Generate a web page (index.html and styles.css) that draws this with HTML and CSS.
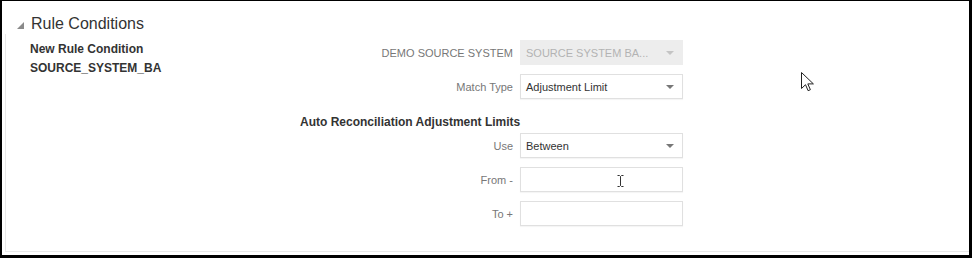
FILE: index.html
```html
<!DOCTYPE html>
<html lang="en">
<head>
  <meta charset="UTF-8">
  <title>Rule Conditions</title>
  <link rel="stylesheet" href="styles.css">
</head>
<body>

  <div class="screen">

    <!-- Section header -->
    <div class="section-title">
      <span class="disclosure"></span>
      <h2>Rule Conditions</h2>
    </div>

    <!-- Section body -->
    <div class="section-body">
      <div class="rule-name">
        <div>New Rule Condition</div>
        <div>SOURCE_SYSTEM_BA</div>
      </div>

      <div class="rule-form">
        <div class="form-row">
          <label>DEMO SOURCE SYSTEM</label>
          <div class="field disabled">
            <span>SOURCE SYSTEM BA...</span>
            <span class="caret"></span>
          </div>
        </div>

        <div class="form-row">
          <label>Match Type</label>
          <div class="field">
            <span>Adjustment Limit</span>
            <span class="caret"></span>
          </div>
        </div>

        <h3>Auto Reconciliation Adjustment Limits</h3>

        <div class="form-row">
          <label>Use</label>
          <div class="field">
            <span>Between</span>
            <span class="caret"></span>
          </div>
        </div>

        <div class="form-row">
          <label>From -</label>
          <div class="field text-field">
            <input type="text">
            <!-- I-beam cursor -->
            <svg class="ibeam" width="7" height="12" viewBox="0 0 7 12">
              <path d="M0.5 0.5h2l1 1 1-1h2M3.5 1.5v9M0.5 11.5h2l1-1 1 1h2" fill="none" stroke="#333" stroke-width="1"/>
            </svg>
          </div>
        </div>

        <div class="form-row">
          <label>To +</label>
          <div class="field text-field">
            <input type="text">
          </div>
        </div>
      </div>
    </div>

    <!-- Mouse pointer -->
    <svg class="pointer" width="13" height="20" viewBox="0 0 13 20">
      <path d="M0.5 0.5v16l4-3.8 2.6 6 2.3-1-2.6-5.8h5.6z" fill="#fff" stroke="#222" stroke-width="1" stroke-linejoin="round"/>
    </svg>

  </div>

</body>
</html>
```

FILE: styles.css
```css
* {
  margin: 0;
  padding: 0;
  box-sizing: border-box;
}

body {
  background: #000;
  font-family: 'Liberation Sans', Arial, sans-serif;
  color: #333;
  overflow: hidden;
}

.screen {
  position: relative;
  margin: 1px 3px 0 2px;
  height: 254px;
  background: #fff;
}

.section-title {
  display: flex;
  align-items: center;
  padding: 13px 0 0 15px;
  height: 33px;
}

.disclosure {
  width: 0;
  height: 0;
  border-left: 7px solid transparent;
  border-bottom: 7px solid #8a8a8a;
  margin: 3px 7px 0 0;
}

.section-title h2 {
  font-size: 16px;
  font-weight: normal;
  line-height: 20px;
  color: #333;
}

.section-body {
  display: flex;
  margin-left: 3px;
  height: 218px;
  padding: 6px 0 0 24px;
  border-left: 1px solid #e8e8e8;
  border-bottom: 1px solid #e8e8e8;
}

.rule-name {
  width: 270px;
  font-size: 12px;
  font-weight: bold;
  line-height: 19px;
  color: #333;
}

.rule-form {
  display: flex;
  flex-direction: column;
  gap: 9px;
}

.rule-form h3 {
  font-size: 12px;
  font-weight: bold;
  line-height: 16px;
  color: #333;
  margin: 6px 0 -6px;
}

.form-row {
  display: grid;
  grid-template-columns: 213px 163px;
  column-gap: 7px;
  align-items: center;
}

.form-row label {
  text-align: right;
  font-size: 11px;
  color: #777;
}

.field {
  position: relative;
  height: 25px;
  display: flex;
  align-items: center;
  justify-content: space-between;
  padding: 0 8px 0 5px;
  border: 1px solid #e0e0e0;
  background: #fff;
  box-shadow: 0 1px 1px rgba(0, 0, 0, 0.04);
  font-size: 11px;
  color: #333;
}

.field.disabled {
  background: #ededed;
  border-color: #ededed;
  box-shadow: none;
  color: #b3b3b3;
}

.caret {
  width: 0;
  height: 0;
  border-left: 4px solid transparent;
  border-right: 4px solid transparent;
  border-top: 4px solid #777;
}

.field.disabled .caret {
  border-top-color: #c4c4c4;
}

.text-field {
  padding: 0;
}

.text-field input {
  width: 100%;
  height: 100%;
  border: none;
  outline: none;
  background: transparent;
  padding: 0 5px;
  font: 11px 'Liberation Sans', Arial, sans-serif;
}

.ibeam {
  position: absolute;
  left: 96px;
  top: 7px;
}

.pointer {
  position: absolute;
  left: 799px;
  top: 71px;
}
```
